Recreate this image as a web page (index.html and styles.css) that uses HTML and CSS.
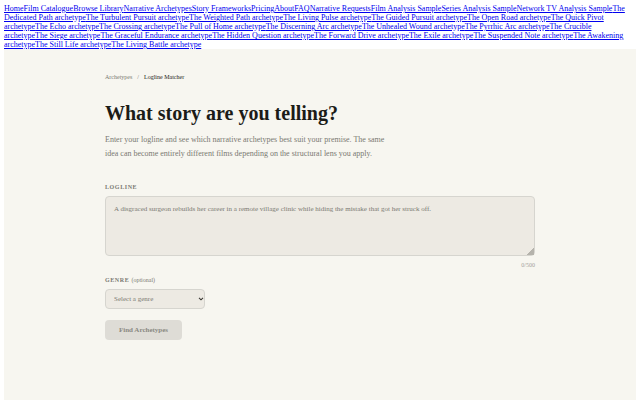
FILE: index.html
```html
<!DOCTYPE html>
<html lang="en">
<head>
    <meta charset="UTF-8">
    <meta name="viewport" content="width=device-width, initial-scale=1.0">
    <title>Logline Matcher</title>
    <link rel="stylesheet" href="styles.css">
</head>
<body>
<nav class="siteNav">
    <a href="#">Home</a><a href="#">Film Catalogue</a><a href="#">Browse Library</a><a href="#">Narrative Archetypes</a><a href="#">Story Frameworks</a><a href="#">Pricing</a><a href="#">About</a><a href="#">FAQ</a><a href="#">Narrative Requests</a><a href="#">Film Analysis Sample</a><a href="#">Series Analysis Sample</a><a href="#">Network TV Analysis Sample</a><a href="#">The Dedicated Path archetype</a><a href="#">The Turbulent Pursuit archetype</a><a href="#">The Weighted Path archetype</a><a href="#">The Living Pulse archetype</a><a href="#">The Guided Pursuit archetype</a><a href="#">The Open Road archetype</a><a href="#">The Quick Pivot archetype</a><a href="#">The Echo archetype</a><a href="#">The Crossing archetype</a><a href="#">The Pull of Home archetype</a><a href="#">The Discerning Arc archetype</a><a href="#">The Unhealed Wound archetype</a><a href="#">The Pyrrhic Arc archetype</a><a href="#">The Crucible archetype</a><a href="#">The Siege archetype</a><a href="#">The Graceful Endurance archetype</a><a href="#">The Hidden Question archetype</a><a href="#">The Forward Drive archetype</a><a href="#">The Exile archetype</a><a href="#">The Suspended Note archetype</a><a href="#">The Awakening archetype</a><a href="#">The Still Life archetype</a><a href="#">The Living Battle archetype</a>
</nav>
<main class="page">
    <div class="container">
        <div class="breadcrumb">
            <a href="#">Archetypes</a>
            <span class="sep">/</span>
            <span class="current">Logline Matcher</span>
        </div>
        <h1 class="title">What story are you telling?</h1>
        <p class="intro">Enter your logline and see which narrative archetypes best suit your premise. The same idea can become entirely different films depending on the structural lens you apply.</p>
        <form class="matcher">
            <label class="label" for="logline">LOGLINE</label>
            <textarea class="logline" id="logline" maxlength="500" placeholder="A disgraced surgeon rebuilds her career in a remote village clinic while hiding the mistake that got her struck off."></textarea>
            <p class="count">0/500</p>
            <label class="label" for="genre">GENRE <span class="optional">(optional)</span></label>
            <div class="selectWrap">
                <select class="genre" id="genre">
                    <option>Select a genre</option>
                </select>
                <svg class="arrow" viewBox="0 0 6 4" aria-hidden="true"><path d="M1 0.8 L3 2.8 L5 0.8" fill="none" stroke="#3c3b36" stroke-width="1.1"/></svg>
            </div>
            <button class="submit" type="submit" disabled>Find Archetypes</button>
        </form>
    </div>
</main>
</body>
</html>
```

FILE: styles.css
```css
* { margin: 0; padding: 0; box-sizing: border-box; }
body { display: flex; flex-direction: column; min-height: 100vh; padding: 4px 4px 0; background: #fff; color: #1c1c18; font: 8px/9px "Liberation Serif", "Times New Roman", serif; }

.siteNav a { color: #0000ee; }

.page { flex: 1; background: #f7f6f0; }
.container { max-width: 462px; margin: 0 auto; padding: 24px 16px; }

.breadcrumb { display: flex; gap: 5px; margin-bottom: 18px; font-size: 6px; line-height: 8px; color: #7a7972; }
.breadcrumb a { color: inherit; text-decoration: none; }
.breadcrumb .current { color: #1c1c18; }

.title { margin-bottom: 6px; font-size: 20px; line-height: 28px; font-weight: 700; }
.intro { max-width: 288px; margin-bottom: 21px; font-size: 8px; line-height: 14px; color: #7a7972; }

.matcher { display: flex; flex-direction: column; align-items: flex-start; }
.label { margin-bottom: 4px; font-size: 6px; line-height: 10px; font-weight: 700; letter-spacing: 0.1em; color: #7a7972; }
.label .optional { font-weight: 400; letter-spacing: 0; }
.logline, .genre { border: 1px solid #d6d5cf; border-radius: 4px; background: #edeae3; color: #7a7972; font-family: inherit; font-size: 7px; }
.logline { width: 100%; height: 60px; padding: 6px 8px; line-height: 12px; resize: vertical; }
.logline::placeholder { color: #7a7972; }
.logline::-webkit-resizer { background: linear-gradient(135deg, transparent 75%, #b5b3ac 75%); }
.count { align-self: flex-end; margin: 4px 0 5px; font-size: 6px; line-height: 10px; color: #a3a29b; }
.selectWrap { position: relative; width: 100px; margin-bottom: 11px; }
.genre { display: block; width: 100%; height: 20px; padding: 0 8px; appearance: none; }
.arrow { position: absolute; right: 1px; top: 8px; width: 6px; height: 4px; pointer-events: none; }
.submit { height: 20px; padding: 0 14px; border: 0; border-radius: 4px; background: #dedcd6; color: #8a8982; font-family: inherit; font-size: 7px; font-weight: 700; }
```
